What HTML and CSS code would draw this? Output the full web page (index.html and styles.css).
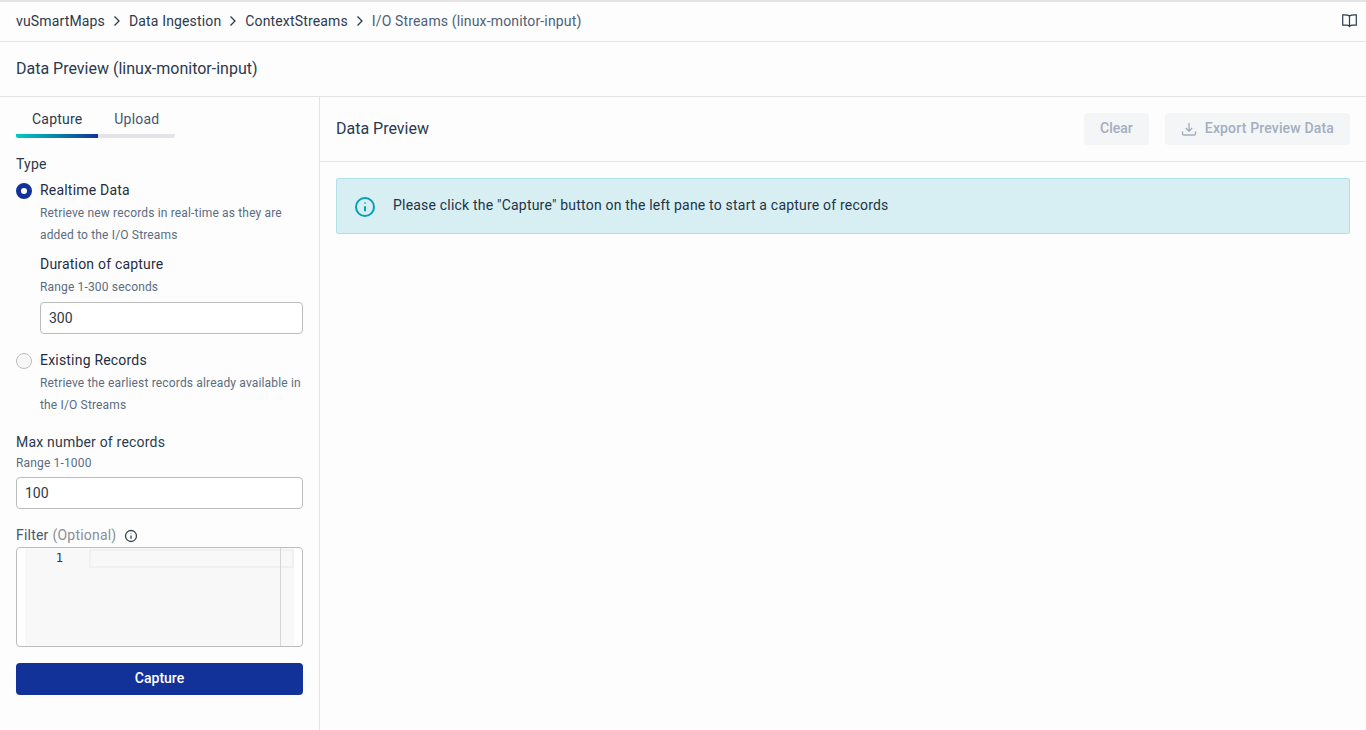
FILE: index.html
```html
<!DOCTYPE html>
<html lang="en">
<head>
    <meta charset="UTF-8">
    <meta name="viewport" content="width=device-width, initial-scale=1.0">
    <title>Data Preview</title>
    <link rel="stylesheet" href="styles.css">
</head>
<body>
    <nav class="crumbs">
        <a>vuSmartMaps</a>
        <svg class="chev" viewBox="0 0 8 12"><path d="M1.5 1.5 6 6l-4.500 4.500"/></svg>
        <a>Data Ingestion</a>
        <svg class="chev" viewBox="0 0 8 12"><path d="M1.5 1.5 6 6l-4.500 4.500"/></svg>
        <a>ContextStreams</a>
        <svg class="chev" viewBox="0 0 8 12"><path d="M1.5 1.5 6 6l-4.500 4.500"/></svg>
        <a class="current">I/O Streams (linux-monitor-input)</a>
        <svg class="book" viewBox="0 0 15 14"><path d="M7.500 2C6.500 1 5 .8 2 .8H.7v10.400H4c1.700 0 2.800.3 3.500 1.200.7-.9 1.800-1.200 3.500-1.200h3.300V.8H13c-3 0-4.500.2-5.500 1.200zM7.500 2v11"/></svg>
    </nav>
    <header class="page-title">Data Preview (linux-monitor-input)</header>

    <div class="main">
        <aside class="pane">
            <div class="tabs">
                <span class="tab">Capture</span>
                <span class="tab">Upload</span>
            </div>

            <div class="label type-label">Type</div>

            <div class="radio-row">
                <span class="radio checked"></span>
                <div class="radio-body">
                    <div class="radio-title">Realtime Data</div>
                    <p class="hint">Retrieve new records in real-time as they are added to the I/O Streams</p>
                    <div class="radio-title duration">Duration of capture</div>
                    <div class="range">Range 1-300 seconds</div>
                    <input class="field" type="text" value="300">
                </div>
            </div>

            <div class="radio-row existing">
                <span class="radio"></span>
                <div class="radio-body">
                    <div class="radio-title">Existing Records</div>
                    <p class="hint">Retrieve the earliest records already available in the I/O Streams</p>
                </div>
            </div>

            <div class="label max-label">Max number of records</div>
            <div class="range max-range">Range 1-1000</div>
            <input class="field" type="text" value="100">

            <div class="label filter-label">
                Filter <span class="optional">(Optional)</span>
                <svg class="info-small" viewBox="0 0 14 14"><circle cx="7" cy="7" r="5.500"/><path d="M7 6.500v3.200M7 4.200v.6"/></svg>
            </div>
            <div class="editor">
                <div class="gutter"><span>1</span></div>
                <div class="code">
                    <div class="active-line"></div>
                    <div class="ruler"></div>
                </div>
            </div>

            <button class="capture">Capture</button>
        </aside>

        <section class="content">
            <div class="content-head">
                <span class="content-title">Data Preview</span>
                <div class="actions">
                    <button class="ghost">Clear</button>
                    <button class="ghost export">
                        <svg viewBox="0 0 16 16"><path d="M8 2v8M4.800 7 8 10.200 11.200 7M1.500 10.500v2.200c0 .7.600 1.300 1.300 1.300h10.400c.7 0 1.300-.6 1.300-1.300v-2.200"/></svg>
                        Export Preview Data
                    </button>
                </div>
            </div>
            <div class="notice">
                <svg viewBox="0 0 20 20"><circle cx="10" cy="10" r="9"/><path d="M10 9.200v5M10 5.600v.8"/></svg>
                <span class="notice-text">Please click the "Capture" button on the left pane to start a capture of records</span>
            </div>
        </section>
    </div>
</body>
</html>
```

FILE: styles.css
```css
* {
    box-sizing: border-box;
}

html, body {
    height: 100%;
}

body {
    margin: 0;
    height: 730px;
    overflow: hidden;
    display: flex;
    flex-direction: column;
    font-family: 'Roboto', sans-serif;
    font-size: 14px;
    letter-spacing: 0.2px;
    color: #2b3a4e;
    background-color: #fdfdfd;
    border-top: 2px solid #e4e4e4;
}

.crumbs {
    height: 40px;
    flex: none;
    display: flex;
    align-items: center;
    padding: 0 9px 2px 16px;
    letter-spacing: 0.15px;
    border-bottom: 1px solid #e4e4e4;
    color: #2b3a4e;
}

.chev {
    width: 8px;
    height: 12px;
    margin: 1px 8px 0 8px;
    fill: none;
    stroke: #2b3a4e;
    stroke-width: 1.300;
}

.current {
    color: #4d6078;
}

.book {
    width: 15px;
    height: 14px;
    margin-left: auto;
    fill: none;
    stroke: #2f3e52;
    stroke-width: 1.200;
}

.page-title {
    height: 55px;
    flex: none;
    display: flex;
    align-items: center;
    padding: 0 16px 2px;
    font-size: 16px;
    letter-spacing: 0;
    border-bottom: 1px solid #e4e4e4;
}

.main {
    flex: 1;
    display: flex;
    min-height: 0;
}

.pane {
    width: 320px;
    flex: none;
    padding: 10px 16px 0;
    border-right: 1px solid #e4e4e4;
}

.tabs {
    width: 159px;
    height: 31px;
    display: flex;
    background: linear-gradient(90deg, #00cdbd 0, #12349a 82px, #e2e4e8 82px) no-repeat bottom / 100% 4px;
    border-radius: 2px;
}

.tab {
    padding: 2px 16px 0;
    line-height: 20px;
    color: #46586f;
}

.tab:first-child {
    color: #2b3a4e;
}

.label {
    line-height: 20px;
}

.type-label {
    margin-top: 16px;
}

.radio-row {
    display: flex;
    margin-top: 6px;
}

.radio {
    width: 16px;
    height: 16px;
    flex: none;
    margin: 3px 8px 0 0;
    border: 1px solid #bdbdbd;
    border-radius: 50%;
    background: #f7f7f7;
}

.radio.checked {
    border: 5px solid #12329a;
    background: #fff;
}

.radio-body {
    flex: 1;
    min-width: 0;
}

.radio-title {
    line-height: 20px;
    color: #1f2d42;
}

.hint {
    margin: 2px 0 0;
    font-size: 12px;
    letter-spacing: 0.16px;
    line-height: 22px;
    color: #5b6c80;
}

.duration {
    margin-top: 8px;
}

.range {
    font-size: 12px;
    letter-spacing: 0.16px;
    line-height: 16px;
    margin-top: 5px;
    color: #5b6c80;
}

.field {
    display: block;
    width: 100%;
    height: 32px;
    margin-top: 7px;
    padding: 0 8px;
    font-family: inherit;
    font-size: 14px;
    color: #2b3a4e;
    background: #fff;
    border: 1px solid #bcbcbc;
    border-radius: 4px;
}

.existing {
    margin-top: 16px;
}

.max-label {
    margin-top: 16px;
}

.max-range {
    margin-top: 3px;
}

.max-range + .field {
    margin-top: 6px;
}

.filter-label {
    display: flex;
    align-items: center;
    gap: 4px;
    margin-top: 16px;
    color: #46586f;
}

.optional {
    color: #8a8f98;
}

.info-small {
    width: 14px;
    height: 14px;
    margin: 1px 0 0 4px;
    fill: none;
    stroke: #3a4656;
    stroke-width: 1.300;
}

.editor {
    display: flex;
    height: 100px;
    margin-top: 2px;
    background: #fff;
    border: 1px solid #bcbcbc;
    border-radius: 4px;
    overflow: hidden;
}

.gutter {
    width: 56px;
    flex: none;
    margin-left: 8px;
    padding-right: 18px;
    text-align: right;
    font-family: 'DejaVu Sans Mono', monospace;
    font-size: 12px;
    letter-spacing: 0;
    line-height: 20px;
    color: #12329a;
    background: #f8f8f8;
}

.code {
    flex: 1;
    position: relative;
    margin-right: 8px;
    background: #f8f8f8;
}

.active-line {
    height: 19px;
    margin: 1px 0 0 8px;
    border: 2px solid #f0f0f0;
}

.ruler {
    position: absolute;
    top: 0;
    bottom: 0;
    right: 13px;
    width: 1px;
    background: #d6d6d6;
}

.capture {
    display: block;
    width: 100%;
    height: 32px;
    margin-top: 16px;
    padding-bottom: 3px;
    font-family: inherit;
    font-size: 14px;
    font-weight: 500;
    color: #fff;
    background-color: #12329a;
    border: none;
    border-radius: 4px;
}

.content {
    flex: 1;
    min-width: 0;
}

.content-head {
    height: 65px;
    display: flex;
    align-items: center;
    justify-content: space-between;
    padding: 0 16px;
    border-bottom: 1px solid #e4e4e4;
}

.content-title {
    margin-bottom: 2px;
    font-size: 16px;
    letter-spacing: 0;
}

.actions {
    display: flex;
    gap: 16px;
}

.ghost {
    display: flex;
    align-items: center;
    height: 32px;
    padding: 0 16px 2px;
    font-family: inherit;
    font-size: 14px;
    font-weight: 500;
    color: #a3aebf;
    background-color: #f3f5f6;
    border: none;
    border-radius: 4px;
}

.export {
    letter-spacing: 0.16px;
}

.export svg {
    width: 16px;
    height: 16px;
    margin: 2px 8px 0 0;
    fill: none;
    stroke: #a3aebf;
    stroke-width: 1.400;
}

.notice {
    display: flex;
    align-items: center;
    height: 56px;
    margin: 16px 16px 0;
    padding-left: 18px;
    color: #243347;
    background-color: #d7eff3;
    border: 1px solid #b2e0e8;
    border-radius: 2px;
}

.notice svg {
    width: 20px;
    height: 20px;
    margin: 1px 18px 0 0;
    fill: none;
    stroke: #06a0b4;
    stroke-width: 2;
}

.notice-text {
    margin-bottom: 2px;
}
```
